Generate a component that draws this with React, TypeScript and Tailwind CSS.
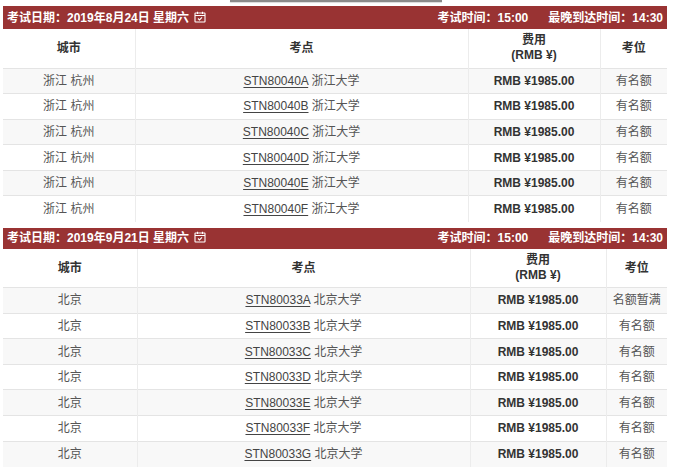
import React from 'react';

type Row = { city: string; code: string; site: string; seat: string };

const FONT = "font-['Liberation_Sans','Noto_Sans_CJK_SC',sans-serif]";

function CalendarIcon() {
    return (
        <svg className="inline-block w-[12px] h-[12px] ml-[5px] -mt-[2px]" viewBox="0 0 12 12" fill="none" stroke="currentColor" strokeWidth={1.1}>
            <rect x="1" y="2" width="10" height="9" rx="0.5" />
            <path d="M1 4.5h10M3.5 0.8v2.2M8.5 0.8v2.2M4 7.5l1.5 1.4L8 6.3" />
        </svg>
    );
}

function ExamTable({ date, rows, widths, barH }: { date: string; rows: Row[]; widths: string[]; barH: string }) {
    return (
        <div>
            <div className={`${barH} bg-[#993333] text-white text-[12px] font-bold flex items-center justify-between pl-[4px] pr-[4px]`}>
                <span className="flex items-center">
                    考试日期：{date} 星期六
                    <CalendarIcon />
                </span>
                <span>
                    考试时间：15:00<span className="inline-block w-[20px]" />最晚到达时间：14:30
                </span>
            </div>
            <table className="w-full border-collapse table-fixed text-[12px] text-[#555]">
                <colgroup>
                    {widths.map((w, i) => (
                        <col key={i} className={w} />
                    ))}
                </colgroup>
                <thead className="text-[#333]">
                    <tr className="h-[39px] bg-white">
                        <th className="font-bold border-r border-[#ececec] text-center">城市</th>
                        <th className="font-bold border-r border-[#ececec] text-center">考点</th>
                        <th className="font-bold border-r border-[#ececec] text-center leading-[15px]">
                            费用
                            <br />
                            (RMB ¥)
                        </th>
                        <th className="font-bold text-center">考位</th>
                    </tr>
                </thead>
                <tbody>
                    {rows.map((r, i) => (
                        <tr key={r.code} className={`h-[25.6px] border-t border-[#e4e4e4] ${i % 2 === 0 ? 'bg-[#f8f8f8]' : 'bg-white'}`}>
                            <td className="text-center border-r border-[#ececec]">{r.city}</td>
                            <td className="text-center border-r border-[#ececec]">
                                <span className="underline underline-offset-2 text-[#444]">{r.code}</span> {r.site}
                            </td>
                            <td className="text-center font-bold text-[#333] border-r border-[#ececec]">RMB ¥1985.00</td>
                            <td className="text-center">{r.seat}</td>
                        </tr>
                    ))}
                </tbody>
            </table>
        </div>
    );
}

export default function App() {
    const hz: Row[] = ['A', 'B', 'C', 'D', 'E', 'F'].map((l) => ({
        city: '浙江 杭州',
        code: `STN80040${l}`,
        site: '浙江大学',
        seat: '有名额',
    }));
    const bj: Row[] = ['A', 'B', 'C', 'D', 'E', 'F', 'G'].map((l) => ({
        city: '北京',
        code: `STN80033${l}`,
        site: '北京大学',
        seat: l === 'A' ? '名额暂满' : '有名额',
    }));

    return (
        <div className={`${FONT} w-[674px] h-[473px] overflow-hidden bg-white pl-[3px] pr-[7px]`}>
            <div className="ml-[227px] w-[212px] h-[2px] bg-[#8a8a8a] shadow-[0_1px_1px_rgba(0,0,0,0.15)]" />
            <div className="mt-[4px]">
                <ExamTable date="2019年8月24日" rows={hz} widths={['w-[132px]', 'w-[333px]', 'w-[132px]', 'w-[67px]']} barH="h-[23px]" />
            </div>
            <div className="mt-[6px]">
                <ExamTable date="2019年9月21日" rows={bj} widths={['w-[134px]', 'w-[333px]', 'w-[136px]', 'w-[61px]']} barH="h-[21px]" />
            </div>
        </div>
    );
}
